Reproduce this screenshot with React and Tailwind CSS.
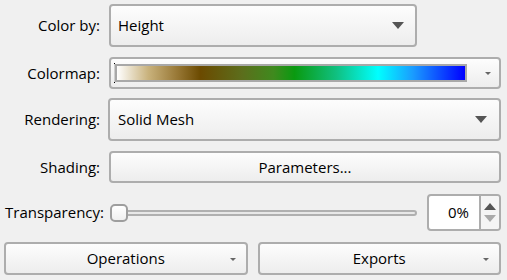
import React from 'react';

const FONT = { fontFamily: '"Segoe UI", "Open Sans", "Noto Sans", sans-serif' };

const boxCls =
  'rounded-[4px] border-2 border-[#adadad] bg-gradient-to-b from-[#fdfdfd] to-[#ededed]';

function Caret({ big = true }) {
  return big ? (
    <svg width="12" height="7" viewBox="0 0 12 7" className="shrink-0">
      <path d="M0 0h12L6 7z" fill="#555" />
    </svg>
  ) : (
    <svg width="6" height="3" viewBox="0 0 6 3" className="shrink-0">
      <path d="M0 0h6L3 3z" fill="#666" />
    </svg>
  );
}

function Label({ children }) {
  return <div className="w-[100px] shrink-0 text-right text-[15px] text-black">{children}</div>;
}

export default function App() {
  return (
    <div className="h-[280px] w-[507px] bg-[#f0f0f0] pr-[6px] pt-[4px]" style={FONT}>
      {/* Color by */}
      <div className="flex h-[43px] items-center gap-[9px]">
        <Label>Color by:</Label>
        <div className={`${boxCls} flex h-[43px] w-[308px] items-center justify-between pl-[7px] pr-[11px]`}>
          <span className="text-[15px] text-black">Height</span>
          <Caret />
        </div>
      </div>

      {/* Colormap */}
      <div className="mt-[10px] flex h-[32px] items-center gap-[9px]">
        <Label>Colormap:</Label>
        <div className={`${boxCls} flex h-[32px] flex-1 items-center pl-[4px] pr-[8px]`}>
          <div className="relative h-[18px] w-[352px] border-2 border-[#a8a8a8] bg-[linear-gradient(to_right,#ffffff_0%,#c9b27c_9%,#9a7a38_17%,#6b4a00_24%,#5c6e1c_36%,#3f8a1e_45%,#0a9a10_51%,#10c080_63%,#00ffff_75%,#1a9cff_85%,#0000ff_100%)]">
            <div className="absolute left-[-3px] top-[-3px] h-[1px] w-[1px] bg-black" />
            <div className="absolute bottom-[-3px] left-[-3px] h-[1px] w-[1px] bg-black" />
            <div className="absolute left-[-3px] top-[-2px] h-[18px] w-[1px] bg-[#cfcfcf]" />
          </div>
          <div className="flex-1" />
          <Caret big={false} />
        </div>
      </div>

      {/* Rendering */}
      <div className="mt-[9px] flex h-[43px] items-center gap-[8px]">
        <div className="w-[100px] shrink-0 text-right text-[15px] text-black">Rendering:</div>
        <div className={`${boxCls} flex h-[43px] flex-1 items-center justify-between pl-[8px] pr-[12px]`}>
          <span className="text-[15px] text-black">Solid Mesh</span>
          <Caret />
        </div>
      </div>

      {/* Shading */}
      <div className="mt-[10px] flex h-[32px] items-center gap-[9px]">
        <Label>Shading:</Label>
        <div className={`${boxCls} flex h-[32px] flex-1 items-center justify-center`}>
          <span className="text-[15px] text-black">Parameters...</span>
        </div>
      </div>

      {/* Transparency */}
      <div className="mt-[11px] flex h-[37px] items-center">
        <div className="w-[105px] shrink-0 pl-[5px] text-[15px] text-black">Transparency:</div>
        <div className="relative ml-[5px] flex h-[18px] w-[307px] items-center">
          <div className="ml-[14px] h-[6px] flex-1 rounded-full border-2 border-[#b0b0b0] bg-[#e8e8e8]" />
          <div className="absolute left-0 top-0 h-[18px] w-[18px] rounded-[5px] border-2 border-[#9e9e9e] bg-gradient-to-b from-white to-[#f0f0f0]" />
        </div>
        <div className="ml-[10px] flex h-[37px] w-[74px] overflow-hidden rounded-[4px] border-2 border-[#adadad] bg-white">
          <div className="flex flex-1 items-center justify-end pr-[10px] text-[15px] text-black">0%</div>
          <div className="flex w-[20px] flex-col items-center justify-center gap-[5px] border-l-2 border-[#adadad] bg-[#f5f5f5]">
            <svg width="12" height="7" viewBox="0 0 12 7">
              <path d="M0 7h12L6 0z" fill="#555" />
            </svg>
            <svg width="12" height="7" viewBox="0 0 12 7">
              <path d="M0 0h12L6 7z" fill="#aaa" />
            </svg>
          </div>
        </div>
      </div>

      {/* Buttons */}
      <div className="mt-[11px] flex h-[33px] gap-[10px] pl-[4px]">
        <div className={`${boxCls} relative flex h-[33px] flex-1 items-center justify-center`}>
          <span className="text-[15px] text-black">Operations</span>
          <div className="absolute right-[10px] top-[14px]">
            <Caret big={false} />
          </div>
        </div>
        <div className={`${boxCls} relative flex h-[33px] flex-1 items-center justify-center`}>
          <span className="text-[15px] text-black">Exports</span>
          <div className="absolute right-[10px] top-[14px]">
            <Caret big={false} />
          </div>
        </div>
      </div>
    </div>
  );
}
